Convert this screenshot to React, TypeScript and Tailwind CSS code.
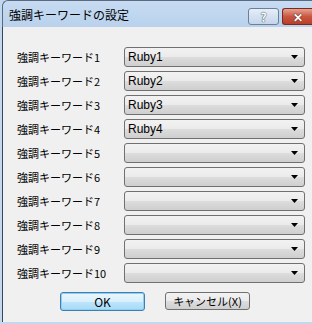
import React from "react";

const font = { fontFamily: '"Noto Sans CJK JP", "Liberation Sans", sans-serif' };

const rows = [
  { label: "強調キーワード1", value: "Ruby1" },
  { label: "強調キーワード2", value: "Ruby2" },
  { label: "強調キーワード3", value: "Ruby3" },
  { label: "強調キーワード4", value: "Ruby4" },
  { label: "強調キーワード5", value: "" },
  { label: "強調キーワード6", value: "" },
  { label: "強調キーワード7", value: "" },
  { label: "強調キーワード8", value: "" },
  { label: "強調キーワード9", value: "" },
  { label: "強調キーワード10", value: "" },
];

const Combo = ({ value }: { value: string }) => (
  <div className="flex h-[20px] w-[181px] items-center justify-between rounded-[3px] border border-[#707070] bg-[linear-gradient(#f2f2f2_0%,#ebebeb_50%,#dddddd_51%,#cfcfcf_100%)] pl-[3px] pr-[6px]">
    <span className="text-[12px] leading-none text-black" style={{ fontFamily: '"Liberation Sans", sans-serif' }}>
      {value}
    </span>
    <svg width="7" height="4" viewBox="0 0 7 4">
      <path d="M0 0H7L3.5 4Z" fill="#000" />
    </svg>
  </div>
);

export default function App() {
  return (
    <div className="relative h-[324px] w-[312px] overflow-hidden bg-[#c2d8ef]" style={font}>
      {/* title bar */}
      <div className="ml-[2px] flex h-[27px] items-center justify-between rounded-tl-[6px] border-l border-t border-[#5a6b80] bg-[linear-gradient(#c7dcf2,#b9d1ec)] pl-[6px]">
        <span className="pt-[2px] text-[12px] leading-none text-black">強調キーワードの設定</span>
        <div className="flex items-start gap-[3px] self-start pt-[7px]">
          <div className="flex h-[17px] w-[31px] items-center justify-center rounded-[3px] border border-[#6d7f98] bg-[linear-gradient(#e6eef8,#c4d5ea)]">
            <span className="text-[12px] font-bold leading-none text-white [text-shadow:0_0_1px_#2c3e55,0_0_1px_#2c3e55]">?</span>
          </div>
          <div className="flex h-[17px] w-[30px] items-center justify-center rounded-l-[3px] border border-r-0 border-[#7a2a20] bg-[linear-gradient(#e5a394,#c9573f_50%,#b8402a)]">
            <span className="text-[12px] font-bold leading-none text-white [text-shadow:0_0_1px_#4a1a12,0_0_1px_#4a1a12]">✕</span>
          </div>
        </div>
      </div>
      {/* client */}
      <div className="ml-[2px] flex h-[295px] flex-col border-l border-[#3a4556] bg-[#f0f0f0] pt-[20px]">
        <div className="flex flex-col gap-[4px]">
          {rows.map((r) => (
            <div key={r.label} className="flex items-center">
              <span className="w-[121px] pl-[14px] text-[11px] leading-none text-black">{r.label}</span>
              <Combo value={r.value} />
            </div>
          ))}
        </div>
        <div className="mt-[9px] flex gap-[20px] pl-[57px]">
          <button className="h-[19px] w-[85px] rounded-[3px] border border-[#3c7fb1] bg-[linear-gradient(#eaf6fd,#d9f0fc_50%,#bee6fd_51%,#a7d9f5)] text-[12px] leading-none text-black shadow-[0_0_0_1px_#8ecff5_inset]">
            OK
          </button>
          <button className="h-[18px] w-[85px] rounded-[3px] border border-[#707070] bg-[linear-gradient(#f2f2f2,#ebebeb_50%,#dddddd_51%,#cfcfcf)] text-[11px] leading-none text-black">
            キャンセル(X)
          </button>
        </div>
      </div>
    </div>
  );
}
